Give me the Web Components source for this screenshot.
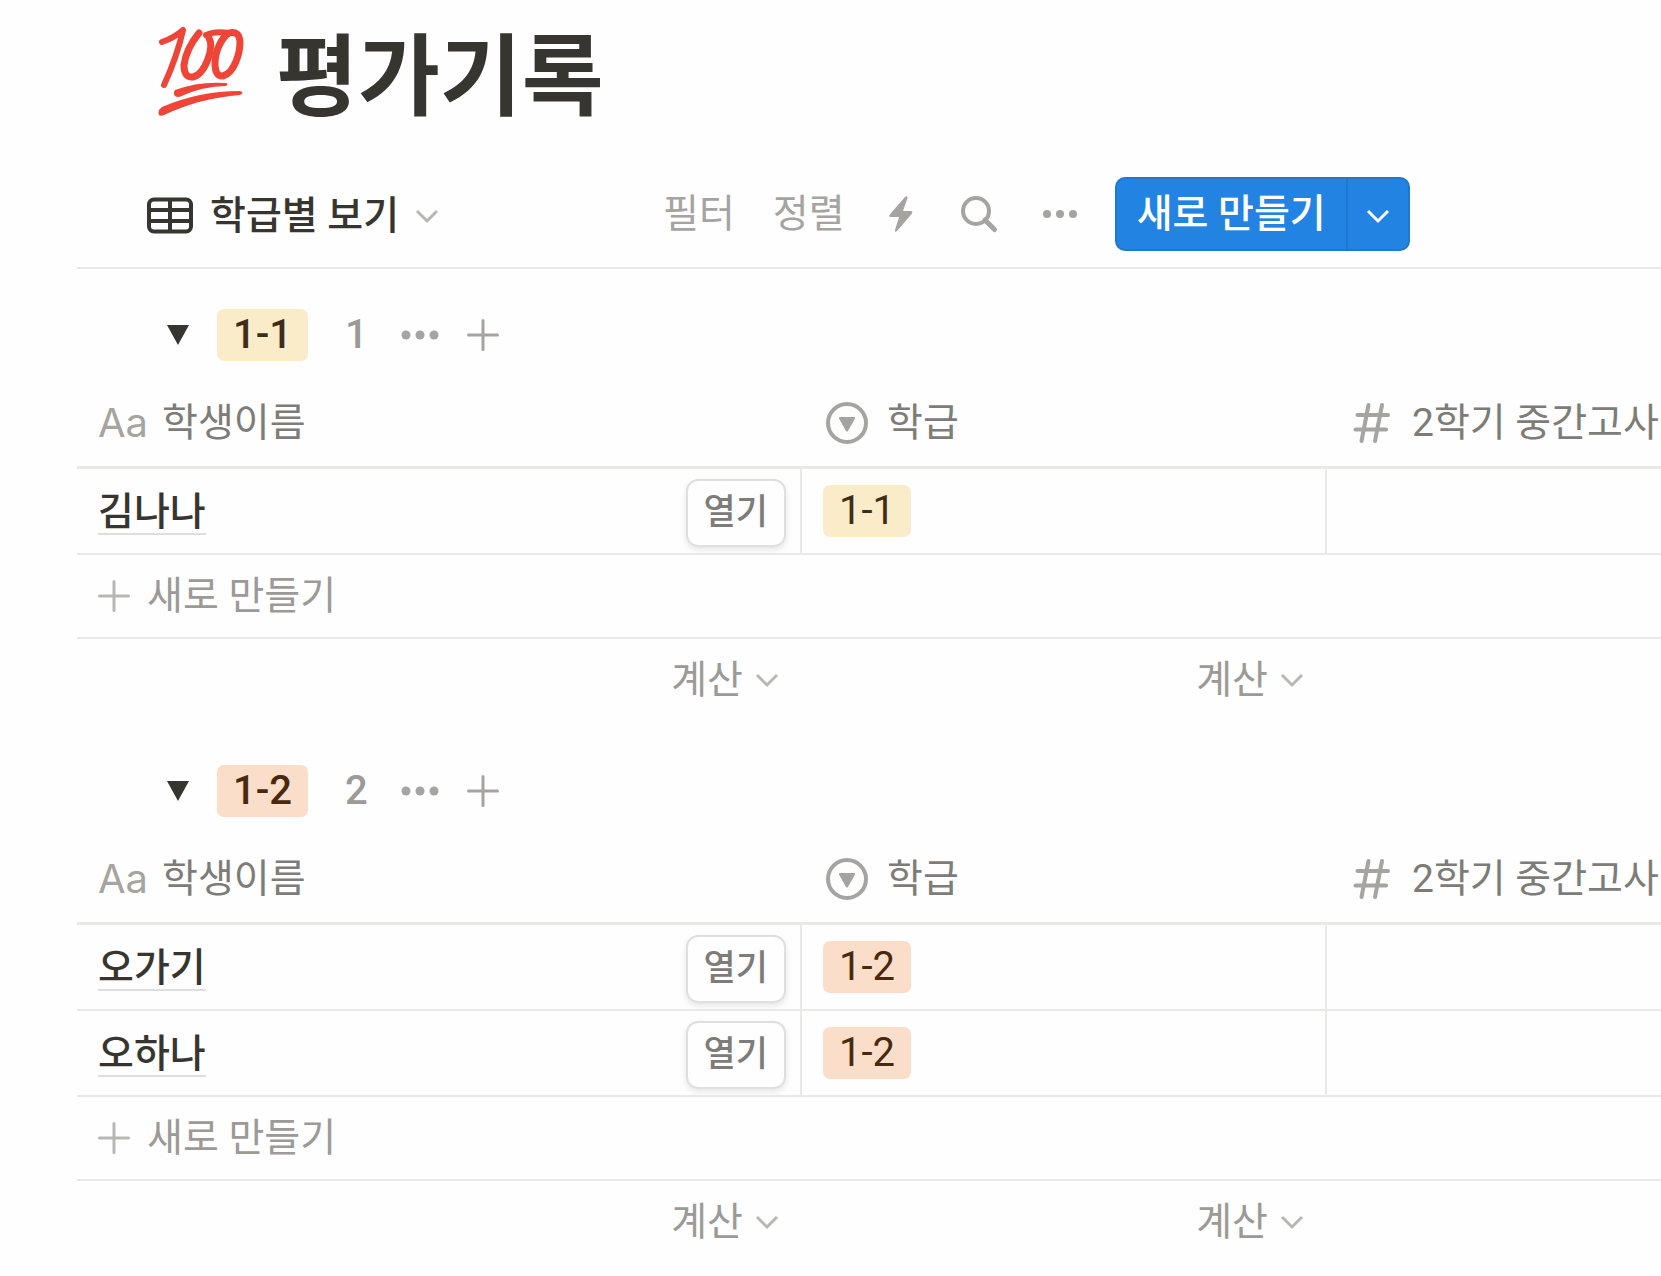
<!DOCTYPE html>
<html lang="ko">
<head>
<meta charset="utf-8">
<meta name="viewport" content="width=device-width, initial-scale=1">
<title>평가기록</title>
<style>
  :root {
    --color-text: #37352f;
    --color-header: #7d7c78;
    --color-muted: #9b9a97;
    --color-icon: #a5a4a0;
    --color-faint: #b8b7b4;
    --color-line: #e9e9e7;
    --color-blue: #2383e2;
    --font-body: 39px;
    --gutter: 21px;
  }
  body {
    margin: 0;
    background: #fefefe;
    color: var(--color-text);
    font-family: Roboto, "Noto Sans CJK KR", sans-serif;
    font-size: var(--font-body);
    line-height: 48px;
    overflow-x: hidden;
  }
  main {
    padding-left: 77px;
  }
</style>
</head>
<body>
  <main>
    <page-title>평가기록</page-title>
    <view-toolbar>학급별 보기</view-toolbar>
    <class-group name="1-1" color="yellow" students="김나나"></class-group>
    <class-group name="1-2" color="orange" students="오가기,오하나"></class-group>
  </main>

<script>
const buttonReset = `
  button {
    display: flex;
    align-items: center;
    margin: 0;
    padding: 0;
    border: 0;
    background: none;
    color: inherit;
    font: inherit;
    white-space: nowrap;
    cursor: pointer;
  }
`;

const icons = {
  table: [48, 38, `<g fill="none" stroke="currentColor" stroke-width="4"><rect x="3" y="2.500" width="42" height="32" rx="5"/><path d="M3 13H45M3 24H45M24 3V34"/></g>`],
  chevron: [24, 16, `<path d="M2 3L12 13L22 3" fill="none" stroke="currentColor" stroke-width="3"/>`],
  bolt: [26, 36, `<path d="M16 1C17.500-.500 19 .5 18.500 2L14 15H22Q24 15.500 23 17.500L8 35Q5.500 37 6 34L10 21H1.500Q-.500 20.500 .8 18.500Z" fill="currentColor"/>`],
  search: [36, 36, `<g fill="none" stroke="currentColor" stroke-width="4"><circle cx="15" cy="15" r="13"/><path d="M24 24L33.500 33.500" stroke-width="5" stroke-linecap="round"/></g>`],
  more: [34, 10, `<g fill="currentColor"><circle cx="4" cy="5" r="4"/><circle cx="17" cy="5" r="4"/><circle cx="30" cy="5" r="4"/></g>`],
  dots: [38, 10, `<g fill="currentColor"><circle cx="5" cy="5" r="4.500"/><circle cx="19" cy="5" r="4.500"/><circle cx="33" cy="5" r="4.500"/></g>`],
  plus: [32, 32, `<path d="M16 1.500V30.500M1.500 16H30.500" fill="none" stroke="currentColor" stroke-width="3" stroke-linecap="round"/>`],
  triangle: [22, 20, `<path d="M0 0H22L11 20Z" fill="currentColor"/>`],
  select: [48, 42, `<circle cx="24" cy="21" r="19" fill="none" stroke="currentColor" stroke-width="4"/><path d="M17 15H31Q32.500 15 32 16.500L25 29Q24 30 23 29L16 16.500Q15.500 15 17 15Z" fill="currentColor"/>`],
  hash: [48, 40, `<path d="M20.500 2L13.500 38M34 2L27 38M9.500 12H40M7.500 26.500H38" fill="none" stroke="currentColor" stroke-width="4" stroke-linecap="round"/>`],
  hundred: [88, 92, `<g fill="none" stroke="currentColor" stroke-linecap="round" stroke-linejoin="round">
      <path d="M5 16Q17 12 26 4Q20 31 7 59" stroke-width="6"/>
      <path d="M42 7Q29 23 27 39Q27 52 36 51Q45 49 51 33Q56 19 52 12" stroke-width="7"/>
      <path d="M49 9Q58 5 72 7" stroke-width="6"/>
      <path d="M72 7C64 12 58 26 58 37Q58 51 66 50C77 47 83 28 83 16Q82 4 72 7Z" stroke-width="7"/>
    </g>
    <path d="M18 64Q42 55 69 57Q72 58 69 60Q46 60 22 71Q16 71 17 66ZM5 81Q42 65 83 65Q88 66 83 69Q43 72 7 89Q0 92 2 84Z" fill="currentColor"/>`],
};

class AppIcon extends HTMLElement {
  connectedCallback() {
    const [width, height, shape] = icons[this.getAttribute("name")];
    this.attachShadow({ mode: "open" }).innerHTML = `
      <style>
        :host { display: block; flex: none; }
        svg { display: block; overflow: visible; }
      </style>
      <svg width="${width}" height="${height}" viewBox="0 0 ${width} ${height}" aria-hidden="true">${shape}</svg>
    `;
  }
}

class PageTitle extends HTMLElement {
  constructor() {
    super();
    this.attachShadow({ mode: "open" }).innerHTML = `
      <style>
        :host {
          display: flex;
          align-items: flex-start;
          gap: 31px;
          padding: 26px 0 15px 80px;
        }
        app-icon { color: #ef4538; }
        h1 {
          margin: 0;
          font-size: 89px;
          font-weight: 700;
          line-height: 104px;
        }
      </style>
      <app-icon name="hundred"></app-icon>
      <h1><slot></slot></h1>
    `;
  }
}

class ViewToolbar extends HTMLElement {
  constructor() {
    super();
    this.attachShadow({ mode: "open" }).innerHTML = `
      <style>
        ${buttonReset}
        :host {
          display: flex;
          align-items: center;
          padding: 32px 0 16px 69px;
          border-bottom: 2px solid var(--color-line);
        }
        .view { gap: 16px; padding-top: 3px; font-weight: 500; }
        .view app-icon:last-child { color: var(--color-faint); }
        .actions {
          display: flex;
          align-items: center;
          gap: 38px;
          margin-left: 224px;
          color: var(--color-icon);
        }
        .icons {
          display: flex;
          align-items: center;
          gap: 46px;
          margin-left: 6px;
        }
        .create {
          display: flex;
          height: 74px;
          box-sizing: border-box;
          border: 2px solid #2078ce;
          border-radius: 10px;
          background: var(--color-blue);
          color: #fff;
          font-weight: 500;
        }
        .create button:first-child { padding: 0 20px; }
        .create button:last-child { padding: 4px 18px 0; border-left: 2px solid #2078ce; }
      </style>
      <button class="view"><app-icon name="table"></app-icon><slot></slot><app-icon name="chevron"></app-icon></button>
      <div class="actions">
        <button>필터</button>
        <button>정렬</button>
        <div class="icons">
          <button aria-label="자동화"><app-icon name="bolt"></app-icon></button>
          <button aria-label="검색"><app-icon name="search"></app-icon></button>
          <button aria-label="더 보기"><app-icon name="more"></app-icon></button>
        </div>
        <div class="create">
          <button>새로 만들기</button>
          <button aria-label="템플릿"><app-icon name="chevron"></app-icon></button>
        </div>
      </div>
    `;
  }
}

class ClassTag extends HTMLElement {
  constructor() {
    super();
    this.attachShadow({ mode: "open" }).innerHTML = `
      <style>
        :host {
          display: inline-block;
          padding: 0 16px;
          border-radius: 7px;
          background: #fbecc9;
          color: #402c1b;
          font-size: 40px;
          line-height: 52px;
          vertical-align: middle;
        }
        :host([color="orange"]) {
          background: #fadec9;
          color: #49290e;
        }
      </style>
      <slot></slot>
    `;
  }
}

class ClassGroup extends HTMLElement {
  connectedCallback() {
    const name = this.getAttribute("name");
    const color = this.getAttribute("color");
    const students = this.getAttribute("students").split(",");
    const calculate = `<button class="calculate">계산<app-icon name="chevron"></app-icon></button>`;

    this.attachShadow({ mode: "open" }).innerHTML = `
      <style>
        ${buttonReset}
        :host { display: block; padding-top: 40px; }
        header {
          display: flex;
          align-items: center;
          padding: 0 0 15px 90px;
          color: var(--color-icon);
        }
        header class-tag { margin: 0 37px 0 28px; font-weight: 500; }
        .toggle { color: var(--color-text); }
        .count {
          min-width: 24px;
          margin-right: 32px;
          color: var(--color-muted);
          font-size: 40px;
          font-weight: 500;
        }
        .more { margin-right: 28px; }

        table {
          width: 100%;
          table-layout: fixed;
          border-collapse: separate;
          border-spacing: 0;
        }
        .name-column { width: 725px; }
        .class-column { width: 525px; }
        th, td {
          box-sizing: border-box;
          padding: 0 0 0 var(--gutter);
          text-align: left;
          white-space: nowrap;
          overflow: hidden;
        }
        th {
          height: 93px;
          padding-top: 4px;
          border-bottom: 3px solid var(--color-line);
          color: var(--color-header);
          font-weight: 400;
        }
        .label { display: flex; align-items: center; gap: 16px; }
        .label app-icon { color: var(--color-icon); }
        .letters {
          width: 48px;
          color: var(--color-icon);
          font-family: Inter, sans-serif;
          font-size: 40px;
          font-weight: 400;
        }
        td { height: 86px; border-bottom: 2px solid var(--color-line); }
        .student td:not(:last-child) { border-right: 2px solid var(--color-line); }
        .name {
          display: flex;
          align-items: center;
          justify-content: space-between;
          padding: 3px 14px 0 0;
        }
        .name a {
          border-bottom: 2px solid #dededc;
          color: inherit;
          font-weight: 500;
          line-height: 42px;
          text-decoration: none;
        }
        .open {
          height: 68px;
          padding: 0 16px;
          border: 2px solid #dfdfde;
          border-radius: 12px;
          box-shadow: 0 3px 6px rgba(15, 15, 15, 0.1);
          color: var(--color-header);
          font-size: 35px;
          font-weight: 500;
        }
        .create td { height: 84px; }
        .create button { gap: 17px; color: var(--color-muted); }
        .create app-icon { color: var(--color-faint); }
        tfoot td { height: 86px; padding-bottom: 4px; border: 0; }
        .calculate {
          gap: 12px;
          margin: 0 23px 0 auto;
          color: var(--color-muted);
        }
        .calculate app-icon { color: var(--color-faint); }
      </style>
      <header>
        <button class="toggle" aria-label="접기"><app-icon name="triangle"></app-icon></button>
        <class-tag color="${color}">${name}</class-tag>
        <span class="count">${students.length}</span>
        <button class="more" aria-label="더 보기"><app-icon name="dots"></app-icon></button>
        <button aria-label="추가"><app-icon name="plus"></app-icon></button>
      </header>
      <table>
        <colgroup><col class="name-column"><col class="class-column"><col></colgroup>
        <thead>
          <tr>
            <th><div class="label"><span class="letters">Aa</span>학생이름</div></th>
            <th><div class="label"><app-icon name="select"></app-icon>학급</div></th>
            <th><div class="label"><app-icon name="hash"></app-icon>2학기 중간고사</div></th>
          </tr>
        </thead>
        <tbody>
          ${students.map((student) => `
            <tr class="student">
              <td><div class="name"><a href="#">${student}</a><button class="open">열기</button></div></td>
              <td><class-tag color="${color}">${name}</class-tag></td>
              <td></td>
            </tr>
          `).join("")}
          <tr class="create">
            <td colspan="3"><button><app-icon name="plus"></app-icon>새로 만들기</button></td>
          </tr>
        </tbody>
        <tfoot>
          <tr><td>${calculate}</td><td>${calculate}</td><td></td></tr>
        </tfoot>
      </table>
    `;
  }
}

customElements.define("app-icon", AppIcon);
customElements.define("page-title", PageTitle);
customElements.define("view-toolbar", ViewToolbar);
customElements.define("class-tag", ClassTag);
customElements.define("class-group", ClassGroup);
</script>
</body>
</html>
